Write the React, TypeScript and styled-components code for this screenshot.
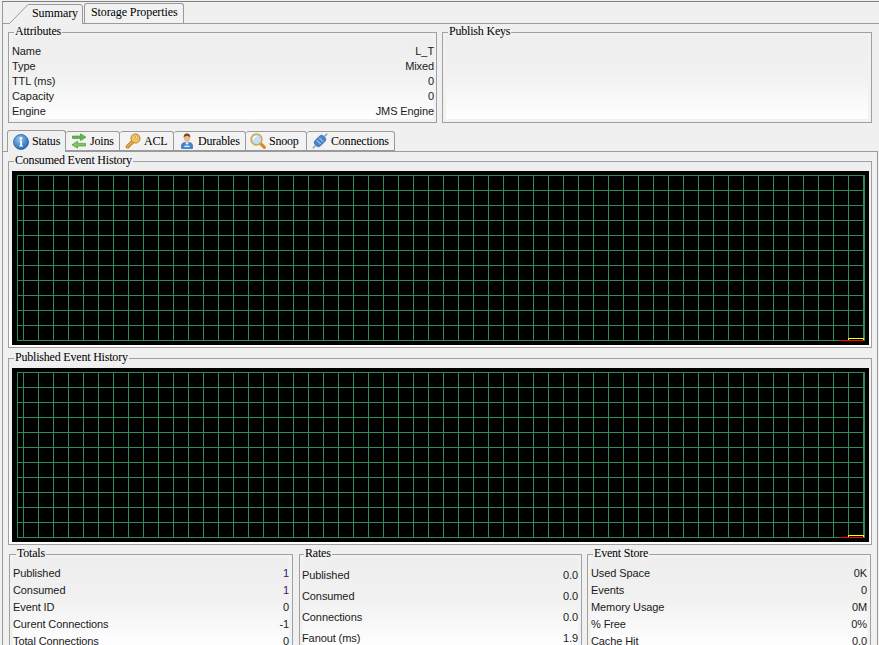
import React from "react";
import styled, { createGlobalStyle } from "styled-components";

const GlobalStyle = createGlobalStyle`
  html, body {
    margin: 0;
    padding: 0;
    background: #f0f0f0;
  }
`;

const Page = styled.div`
  width: 879px;
  height: 645px;
  overflow: hidden;
  padding-top: 1px;
  box-sizing: border-box;
  background: #f0f0f0;
  font-family: "Liberation Sans", Arial, sans-serif;
  font-size: 11px;
  letter-spacing: -0.1px;
  color: #1a1a1a;
`;

const Shell = styled.div`
  margin-left: 2px;
  height: 650px;
  border-top: 1px solid #808080;
  border-left: 1px solid #9a9a9a;
`;

const TopTabBar = styled.div`
  display: flex;
  align-items: flex-end;
  height: 21px;
  border-bottom: 1px solid #9a9a9a;
  font-family: "Liberation Serif", "Times New Roman", serif;
  font-size: 12px;
  letter-spacing: -0.1px;
  color: #000;
`;

const SummaryTab = styled.div`
  position: relative;
  box-sizing: border-box;
  width: 81px;
  height: 22px;
  margin-bottom: -1px;
  padding: 4px 0 0 29px;
  line-height: 14px;

  svg {
    position: absolute;
    left: 0;
    top: 0;
  }

  span {
    position: relative;
  }
`;

const StorageTab = styled.div`
  box-sizing: border-box;
  width: 100px;
  height: 20px;
  padding: 1px 0 0 6px;
  line-height: 14px;
  background: #f2f2f2;
  border: 1px solid #9a9a9a;
  border-bottom: none;
  border-radius: 3px 3px 0 0;
`;

const SummaryRow = styled.div`
  display: flex;
  gap: 5px;
  padding: 8px 0 0 5px;
`;

const Group = styled.div<{ $w: number; $h: number; $inset?: number }>`
  position: relative;
  box-sizing: border-box;
  width: ${(p) => p.$w}px;
  height: ${(p) => p.$h}px;
  flex: none;
  border: 1px solid #a0a0a0;
  background: linear-gradient(#eeeeee 0%, #f1f1f1 45%, #ffffff 100%);
  box-shadow: inset 0 0 0 ${(p) => p.$inset ?? 0}px #f2f2f2;
`;

const Legend = styled.div<{ $left?: number }>`
  position: absolute;
  top: -9px;
  left: ${(p) => p.$left ?? 5}px;
  padding: 0 1px;
  background: #f0f0f0;
  font-family: "Liberation Serif", "Times New Roman", serif;
  font-size: 12px;
  letter-spacing: -0.2px;
  line-height: 15px;
  color: #000;
  white-space: nowrap;
`;

const Rows = styled.div<{ $top: number; $left?: number; $right?: number }>`
  display: flex;
  flex-direction: column;
  padding: ${(p) => p.$top}px ${(p) => p.$right ?? 3}px 0 ${(p) => p.$left ?? 3}px;
`;

const Row = styled.div<{ $h: number }>`
  display: flex;
  justify-content: space-between;
  flex: none;
  height: ${(p) => p.$h}px;
  line-height: ${(p) => p.$h}px;
`;

const Value = styled.span<{ $accent?: boolean }>`
  color: ${(p) => (p.$accent ? "#4a1070" : "#1a1a1a")};
`;

const TabBar = styled.div`
  display: flex;
  align-items: flex-end;
  height: 21px;
  margin-top: 7px;
  padding-left: 4px;
  font-family: "Liberation Serif", "Times New Roman", serif;
  font-size: 12px;
  letter-spacing: -0.2px;
  color: #000;
`;

const Tab = styled.div<{ $w: number; $active?: boolean; $pad: number }>`
  position: relative;
  box-sizing: border-box;
  display: flex;
  align-items: center;
  gap: 3px;
  flex: none;
  width: ${(p) => p.$w}px;
  height: ${(p) => (p.$active ? 22 : 20)}px;
  margin-bottom: ${(p) => (p.$active ? -1 : 0)}px;
  padding-left: ${(p) => p.$pad}px;
  background: ${(p) => (p.$active ? "#f0f0f0" : "#f3f3f3")};
  border: 1px solid #9a9a9a;
  border-left-width: ${(p) => (p.$active ? 1 : 0)}px;
  border-bottom: ${(p) => (p.$active ? "none" : "1px solid #9a9a9a")};
  border-radius: 3px 3px 0 0;
`;

const Panel = styled.div`
  display: flex;
  flex-direction: column;
  margin-right: 1px;
  padding: 9px 4px 0 5px;
  border-top: 1px solid #9a9a9a;
  border-right: 1px solid #9a9a9a;
`;

const ChartGroup = styled(Group)`
  padding: 9px 0 0 3px;
`;

const ChartCanvas = styled.svg`
  display: block;
  background: #000;
`;

const ChartSpacer = styled.div`
  flex: none;
  height: 10px;
`;

const StatsRow = styled.div`
  display: flex;
  margin-top: 9px;
  padding-left: 1px;
`;

const StatsGap = styled.div<{ $w: number }>`
  flex: none;
  width: ${(p) => p.$w}px;
`;

const GRID_GREEN = "#2e8b57";
const verticals = Array.from({ length: 57 }, (_, i) => 11 + i * 15);
const horizontals = Array.from({ length: 12 }, (_, i) => 4 + i * 15);

const HistoryChart = () => (
  <ChartCanvas width={857} height={174} viewBox="0 0 857 174">
    <g stroke={GRID_GREEN} strokeWidth={1} shapeRendering="crispEdges">
      <line x1={5.5} y1={4} x2={5.5} y2={170} />
      {verticals.map((x) => (
        <line key={x} x1={x + 0.5} y1={4} x2={x + 0.5} y2={170} />
      ))}
      {horizontals.map((y) => (
        <line key={y} x1={5} y1={y + 0.5} x2={852} y2={y + 0.5} />
      ))}
      <line x1={852.5} y1={4} x2={852.5} y2={170} />
    </g>
    <path d="M836.5 169V167.5H851.5V169" fill="none" stroke="#ffff00" shapeRendering="crispEdges" />
    <line x1={827} y1={169.5} x2={852} y2={169.5} stroke="#ff0000" shapeRendering="crispEdges" />
  </ChartCanvas>
);

const InfoIcon = () => (
  <svg width={16} height={16} viewBox="0 0 16 16">
    <defs>
      <radialGradient id="infoFill" cx="40%" cy="30%" r="75%">
        <stop offset="0%" stopColor="#8fc4f2" />
        <stop offset="100%" stopColor="#1f64b4" />
      </radialGradient>
    </defs>
    <circle cx={8} cy={8} r={7.5} fill="url(#infoFill)" stroke="#2a5f9e" strokeWidth={0.8} />
    <circle cx={8} cy={4.4} r={1.3} fill="#fff" />
    <path d="M6.4 6.6H9V11.6H10V12.6H6.2V11.6H7.2V7.6H6.4Z" fill="#fff" />
  </svg>
);

const ArrowsIcon = () => (
  <svg width={16} height={16} viewBox="0 0 16 16">
    <path d="M1.5 3H9.5V.8L15 4.2L9.5 7.6V5.4H1.5Z" fill="#5fbb46" stroke="#3b8a2e" strokeWidth={0.6} />
    <path d="M14.5 10.4H6.5V8.2L1 11.8L6.5 15.2V13H14.5Z" fill="#7ccb5a" stroke="#3b8a2e" strokeWidth={0.6} />
  </svg>
);

const KeyIcon = () => (
  <svg width={16} height={16} viewBox="0 0 16 16">
    <path d="M7 7L1.2 12.8V15H4V13.4H5.4V12H6.8L9 9.6Z" fill="#e8a63c" stroke="#a8701c" strokeWidth={0.7} />
    <circle cx={10.5} cy={5.5} r={4.6} fill="#f3c25f" stroke="#a8701c" strokeWidth={0.8} />
    <circle cx={11.6} cy={4.2} r={1.2} fill="#fff3cf" stroke="#a8701c" strokeWidth={0.5} />
  </svg>
);

const PersonIcon = () => (
  <svg width={16} height={16} viewBox="0 0 16 16">
    <path d="M2.5 15.5V12.4C2.5 10.4 4.4 9.6 5.8 9.4H10.2C11.6 9.6 13.5 10.4 13.5 12.4V15.5Z" fill="#3f86d0" stroke="#275f9e" strokeWidth={0.6} />
    <path d="M6 9.4L8 12L10 9.4Z" fill="#fff" />
    <rect x={5.4} y={12.6} width={5.2} height={1.5} fill="#dcecfa" />
    <ellipse cx={8} cy={5} rx={3} ry={3.8} fill="#eab98a" />
    <path d="M4.8 5C4.4 1.8 6 .6 8 .6S11.6 1.8 11.2 5C10.6 3.4 9.4 3 8 3S5.4 3.4 4.8 5Z" fill="#7a4a20" />
  </svg>
);

const LensIcon = () => (
  <svg width={16} height={16} viewBox="0 0 16 16">
    <line x1={10.4} y1={10.4} x2={14.4} y2={14.4} stroke="#d98a1e" strokeWidth={3} strokeLinecap="round" />
    <circle cx={6.5} cy={6.5} r={5.4} fill="#bfe2f6" stroke="#d9a75a" strokeWidth={1.6} />
    <path d="M3.4 6.4C3.4 4.6 4.8 3.2 6.6 3.2" fill="none" stroke="#fff" strokeWidth={1.2} />
  </svg>
);

const PlugIcon = () => (
  <svg width={16} height={16} viewBox="0 0 16 16">
    <path d="M.8 15.2L3.5 12.5M12.5 3.5L15.2 .8" stroke="#7d9cc2" strokeWidth={1.4} />
    <rect x={2} y={4.2} width={12} height={7.6} rx={3.2} transform="rotate(-45 8 8)" fill="#4c86cf" stroke="#2f5f9e" strokeWidth={0.7} />
    <path d="M4.8 7.2L8.8 11.2M7.2 4.8L11.2 8.8" stroke="#cfe2f7" strokeWidth={1} />
  </svg>
);

const tabs = [
  { label: "Status", width: 59, pad: 5, icon: <InfoIcon /> , active: true },
  { label: "Joins", width: 54, pad: 5, icon: <ArrowsIcon /> },
  { label: "ACL", width: 54, pad: 5, icon: <KeyIcon /> },
  { label: "Durables", width: 72, pad: 5, icon: <PersonIcon /> },
  { label: "Snoop", width: 61, pad: 4, icon: <LensIcon /> },
  { label: "Connections", width: 88, pad: 5, icon: <PlugIcon /> },
];

type Stat = { label: string; value: string; accent?: boolean };

const attributes: Stat[] = [
  { label: "Name", value: "L_T" },
  { label: "Type", value: "Mixed" },
  { label: "TTL (ms)", value: "0" },
  { label: "Capacity", value: "0" },
  { label: "Engine", value: "JMS Engine" },
];

const totals: Stat[] = [
  { label: "Published", value: "1", accent: true },
  { label: "Consumed", value: "1", accent: true },
  { label: "Event ID", value: "0" },
  { label: "Curent Connections", value: "-1" },
  { label: "Total Connections", value: "0" },
];

const rates: Stat[] = [
  { label: "Published", value: "0.0" },
  { label: "Consumed", value: "0.0" },
  { label: "Connections", value: "0.0" },
  { label: "Fanout (ms)", value: "1.9" },
];

const eventStore: Stat[] = [
  { label: "Used Space", value: "0K" },
  { label: "Events", value: "0" },
  { label: "Memory Usage", value: "0M" },
  { label: "% Free", value: "0%" },
  { label: "Cache Hit", value: "0.0" },
];

const StatRows = ({ items, height, top, left, right }: { items: Stat[]; height: number; top: number; left?: number; right?: number }) => (
  <Rows $top={top} $left={left} $right={right}>
    {items.map((item) => (
      <Row key={item.label} $h={height}>
        <span>{item.label}</span>
        <Value $accent={item.accent}>{item.value}</Value>
      </Row>
    ))}
  </Rows>
);

export default function App() {
  return (
    <Page>
      <GlobalStyle />
      <Shell>
        <TopTabBar>
          <SummaryTab>
            <svg width={81} height={22} viewBox="0 0 81 22">
              <path d="M0 21.5H6.5L25 2.5H77Q79.5 2.5 79.5 5V22H0Z" fill="#f0f0f0" />
              <path d="M0 21.5H6.5L25 2.5H77Q79.5 2.5 79.5 5V22" fill="none" stroke="#9a9a9a" />
            </svg>
            <span>Summary</span>
          </SummaryTab>
          <StorageTab>Storage Properties</StorageTab>
        </TopTabBar>

        <SummaryRow>
          <Group $w={429} $h={91} $inset={3}>
            <Legend>Attributes</Legend>
            <StatRows items={attributes} height={15} top={11} right={2} />
          </Group>
          <Group $w={430} $h={91} $inset={3}>
            <Legend>Publish Keys</Legend>
          </Group>
        </SummaryRow>

        <TabBar>
          {tabs.map((tab) => (
            <Tab key={tab.label} $w={tab.width} $pad={tab.pad} $active={tab.active}>
              {tab.icon}
              <span>{tab.label}</span>
            </Tab>
          ))}
        </TabBar>

        <Panel>
          <ChartGroup $w={864} $h={187}>
            <Legend>Consumed Event History</Legend>
            <HistoryChart />
          </ChartGroup>
          <ChartSpacer />
          <ChartGroup $w={864} $h={187}>
            <Legend>Published Event History</Legend>
            <HistoryChart />
          </ChartGroup>

          <StatsRow>
            <Group $w={284} $h={96} $inset={3}>
              <Legend $left={6}>Totals</Legend>
              <StatRows items={totals} height={17} top={10} />
            </Group>
            <StatsGap $w={6} />
            <Group $w={283} $h={96} $inset={3}>
              <Legend $left={4}>Rates</Legend>
              <StatRows items={rates} height={21} top={10} left={2} />
            </Group>
            <StatsGap $w={5} />
            <Group $w={284} $h={96} $inset={3}>
              <Legend>Event Store</Legend>
              <StatRows items={eventStore} height={17} top={10} />
            </Group>
          </StatsRow>
        </Panel>
      </Shell>
    </Page>
  );
}
